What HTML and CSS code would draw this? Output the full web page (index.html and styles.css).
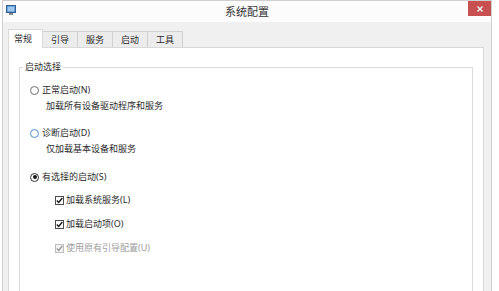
FILE: index.html
```html
<!DOCTYPE html>
<html lang="zh-CN">
<head>
  <meta charset="UTF-8">
  <meta name="viewport" content="width=device-width, initial-scale=1.0">
  <title>系统配置</title>
  <link rel="stylesheet" href="styles.css">
</head>
<body>
  <div class="window">
    <div class="titlebar">
      <svg class="app-icon" width="10" height="10" viewBox="0 0 10 10">
        <rect x="0.5" y="0.5" width="9" height="7" fill="#4a86c8" stroke="#2f5f95"/>
        <rect x="1.5" y="1.5" width="7" height="5" fill="#9cc6ee"/>
        <rect x="3" y="8" width="4" height="2" fill="#8a8a8a"/>
      </svg>
      <span class="title">系统配置</span>
      <button class="close-btn">
        <svg width="6" height="6" viewBox="0 0 6 6">
          <path d="M0.5 0.5 L5.5 5.5 M5.5 0.5 L0.5 5.5" stroke="#fff" stroke-width="1.3"/>
        </svg>
      </button>
    </div>

    <div class="client">
      <div class="tabs">
        <div class="tab active">常规</div>
        <div class="tab">引导</div>
        <div class="tab">服务</div>
        <div class="tab">启动</div>
        <div class="tab">工具</div>
      </div>

      <div class="panel">
        <fieldset class="group">
          <legend>启动选择</legend>
          <div class="group-body">
            <div class="option first">
              <span class="radio"></span>正常启动(N)
            </div>
            <div class="desc">加载所有设备驱动程序和服务</div>

            <div class="option gap">
              <span class="radio hover"></span>诊断启动(D)
            </div>
            <div class="desc">仅加载基本设备和服务</div>

            <div class="option gap-lg">
              <span class="radio checked"></span>有选择的启动(S)
            </div>

            <div class="check-row">
              <span class="checkbox">
                <svg width="7" height="7" viewBox="0 0 7 7"><path d="M0.8 3.6 L2.7 5.5 L6.3 1" fill="none" stroke="#1a1a1a" stroke-width="1.4"/></svg>
              </span>加载系统服务(L)
            </div>
            <div class="check-row">
              <span class="checkbox">
                <svg width="7" height="7" viewBox="0 0 7 7"><path d="M0.8 3.6 L2.7 5.5 L6.3 1" fill="none" stroke="#1a1a1a" stroke-width="1.4"/></svg>
              </span>加载启动项(O)
            </div>
            <div class="check-row disabled">
              <span class="checkbox">
                <svg width="7" height="7" viewBox="0 0 7 7"><path d="M0.8 3.6 L2.7 5.5 L6.3 1" fill="none" stroke="#9a9a9a" stroke-width="1.4"/></svg>
              </span>使用原有引导配置(U)
            </div>
          </div>
        </fieldset>
      </div>
    </div>
  </div>
</body>
</html>
```

FILE: styles.css
```css
body {
  margin: 0;
  height: 291px;
  overflow: hidden;
  background-color: #fff;
  font-family: "Noto Sans", "Noto Sans CJK SC", sans-serif;
  color: #2b2b2b;
}

.window {
  margin-left: 2px;
  width: 490px;
  height: 300px;
  box-sizing: border-box;
  border: 1px solid #cfcfcf;
  border-bottom: none;
  display: flex;
  flex-direction: column;
}

.titlebar {
  height: 21px;
  background-color: #fcfcfc;
  display: grid;
  grid-template-columns: 1fr auto 1fr;
  align-items: start;
}

.app-icon {
  margin: 4px 0 0 3px;
}

.title {
  font-size: 11px;
  line-height: 22px;
  color: #333;
}

.close-btn {
  justify-self: end;
  width: 23px;
  height: 15px;
  margin: 0;
  padding: 0;
  border: none;
  background-color: #c75050;
  display: flex;
  align-items: center;
  justify-content: center;
}

.client {
  flex: 1;
  background-color: #f0f0f0;
  padding: 7px 7px 0 5px;
  display: flex;
  flex-direction: column;
}

.tabs {
  display: flex;
  align-items: flex-end;
  height: 18px;
}

.tab {
  height: 16px;
  box-sizing: border-box;
  line-height: 15px;
  padding: 0 8px;
  font-size: 9px;
  border: 1px solid #d0d0d0;
  border-bottom: none;
  background-color: #ececec;
  margin-left: -1px;
}

.tab.active {
  height: 19px;
  line-height: 18px;
  padding: 0 10px 0 5px;
  margin-left: 0;
  margin-bottom: -1px;
  background-color: #fff;
  border-color: #d9d9d9;
  position: relative;
  z-index: 1;
}

.panel {
  flex: 1;
  background-color: #fff;
  border: 1px solid #d9d9d9;
  padding: 13px 10px 0 10px;
}

.group {
  margin: 0;
  padding: 0;
  min-height: 240px;
  border: 1px solid #dcdcdc;
}

.group legend {
  font-size: 9px;
  line-height: 12px;
  padding: 0 2px;
  margin-left: 3px;
}

.group-body {
  font-size: 9px;
  line-height: 12px;
}

.option {
  display: flex;
  align-items: center;
  padding-left: 10px;
}

.option.first {
  margin-top: 11px;
}

.option.gap {
  margin-top: 15px;
}

.option.gap-lg {
  margin-top: 16px;
}

.radio {
  width: 9px;
  height: 9px;
  box-sizing: border-box;
  border: 1px solid #6d6d6d;
  border-radius: 50%;
  background-color: #fff;
  margin-right: 3px;
  display: flex;
  align-items: center;
  justify-content: center;
}

.radio.hover {
  border-color: #4a8fd0;
}

.radio.checked {
  border-color: #333;
}

.radio.checked::after {
  content: "";
  width: 4px;
  height: 4px;
  border-radius: 50%;
  background-color: #1a1a1a;
}

.desc {
  padding-left: 26px;
  margin-top: 4px;
}

.check-row {
  display: flex;
  align-items: center;
  padding-left: 35px;
  margin-top: 11px;
}

.check-row + .check-row {
  margin-top: 12px;
}

.check-row.disabled {
  color: #9d9d9d;
}

.checkbox {
  width: 9px;
  height: 9px;
  box-sizing: border-box;
  border: 1px solid #4a4a4a;
  background-color: #fff;
  margin-right: 2px;
  display: flex;
  align-items: center;
  justify-content: center;
}

.check-row.disabled .checkbox {
  border-color: #bdbdbd;
  background-color: #f3f3f3;
}
```
